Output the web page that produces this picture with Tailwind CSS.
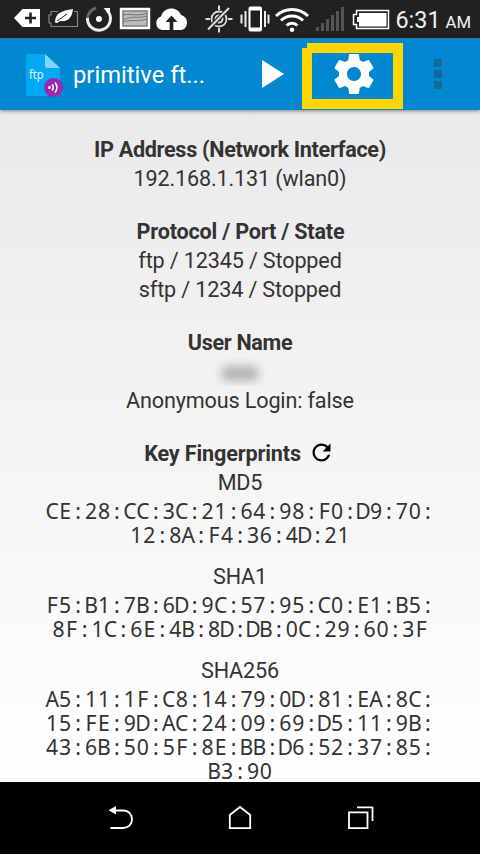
<!DOCTYPE html>
<html lang="en">
<head>
<meta charset="utf-8">
<title>primitive ftpd</title>
<script src="https://cdn.jsdelivr.net/npm/@tailwindcss/browser@4"></script>
</head>
<body class="w-[480px] h-[854px] overflow-hidden flex flex-col font-['Roboto',sans-serif] text-[#333]">
<header class="h-[38px] shrink-0 bg-[#212121] text-white">
<svg class="block" width="480" height="38" viewBox="0 0 480 38" fill="none">
  <!-- notifications -->
  <path d="M14 18 22.500 9H40V27H22.500Z" fill="#fff"/><path d="M30.500 12.500V23.500M25 18H36" stroke="#222" stroke-width="2.600"/>
  <path d="M58 11.500H51V15H49V23H51V26.500H77.500V11.500H74" stroke="#888" stroke-width="1.200"/>
  <path d="M55 22.500C55 13 61 11 73 9 72 17 69 22 60 21L57 23Z" fill="#fff"/><path d="M57 21 67 14" stroke="#222" stroke-width="1"/>
  <path d="M96 8A11.500 11.500 0 0 0 87.500 19" stroke="#666" stroke-width="3"/><path d="M87.500 18A11.500 11.500 0 1 0 107 10.500" stroke="#eee" stroke-width="3"/><path d="M103.500 8H110V15.500Z" fill="#fff"/><circle cx="99" cy="19" r="3" fill="#fff"/>
  <path d="M121 9H149V28H121Z" fill="#bbb" stroke="#fff" stroke-width="2.400"/><rect x="123" y="11" width="24" height="15" stroke="#666" stroke-width="1"/><path d="M123 15C131 13 139 17 147 13M123 20C132 15 138 19 147 16M123 22C131 19 138 22 147 19" stroke="#777" stroke-width="1"/>
  <path d="M162 30A7 7 0 0 1 161 16.500C164 6 178 6 181 15C190 17 188 30 181 30Z" fill="#fff"/><path d="M171.500 30V19" stroke="#222" stroke-width="3.600"/><path d="M165.500 22 171.500 15.500 177.500 22Z" fill="#222"/>
  <!-- location off -->
  <circle cx="219" cy="19" r="7.500" stroke="#ddd" stroke-width="1.800"/><circle cx="219" cy="19" r="3.500" stroke="#ddd" stroke-width="2"/>
  <path d="M219 5.500V10M219 28V32.500M205.500 19H210M228 19H232.500" stroke="#ddd" stroke-width="2"/>
  <path d="M208 29.500 229 8" stroke="#212121" stroke-width="4.500"/><path d="M208 29.500 229 8" stroke="#ddd" stroke-width="2"/>
  <!-- vibrate -->
  <rect x="249.500" y="7.500" width="11.500" height="23" rx="1" stroke="#fff" stroke-width="2"/><path d="M249 9H261.500M249 29H261.500" stroke="#fff" stroke-width="3"/>
  <path d="M245.500 11V27M241.500 14.500V23.500M265 11V27M268.500 14.500V23.500" stroke="#eee" stroke-width="2"/>
  <!-- wifi -->
  <path d="M276 16A23 23 0 0 1 308 16M281 20.500A16 16 0 0 1 303 20.500M286.500 25.500A8 8 0 0 1 297.500 25.500" stroke="#fff" stroke-width="3"/><circle cx="292" cy="29.800" r="2.300" fill="#fff"/>
  <!-- signal -->
  <path d="M317.500 31V27M322.500 31V23M327.500 31V19M332.500 31V15M337.500 31V11M342.500 31V7" stroke="#555" stroke-width="3"/>
  <!-- battery -->
  <path d="M356.500 10.500H388.500V28.500H356.500V24.500H353.500V14.500H356.500Z" stroke="#fff" stroke-width="1.500"/><path d="M359 13H386.500V26.500H359V22H357V17H359Z" fill="#fff"/>
  <text x="395.500" y="28" font-size="24" fill="#f2f2f2" textLength="45" lengthAdjust="spacingAndGlyphs">6:31</text>
  <text x="445.500" y="28" font-size="16.500" fill="#f2f2f2" textLength="25.500" lengthAdjust="spacingAndGlyphs">AM</text>
</svg>
</header>
<nav class="relative z-10 h-[72px] shrink-0 bg-[#0288d1] border-t border-[#1c7bb5] flex items-center shadow-[0_1px_4px_rgba(0,0,0,0.45)]">
  <svg class="ml-[24px] shrink-0" width="42" height="48" viewBox="24 50 42 48" fill="none">
    <path d="M28 53H45L60 67V93Q60 95 58 95H28Q26 95 26 93V55Q26 53 28 53Z" fill="#03a9f4"/><path d="M45 53 60 67H47Q45 67 45 65Z" fill="#81d4fa"/>
    <text x="29" y="78" font-size="12" fill="#e1f5fe" font-family="Noto Sans" textLength="14.500" lengthAdjust="spacingAndGlyphs">ftp</text>
    <circle cx="53.500" cy="86.500" r="9.500" fill="#9c27b0"/><circle cx="49.500" cy="86.500" r="1.500" fill="#fff"/>
    <path d="M52 83.500Q54.500 86.500 52 89.500M55 81.500Q59 86.500 55 91.500" stroke="#fff" stroke-width="1.600"/>
  </svg>
  <h1 class="ml-[7px] w-[150px] text-[24px] leading-[30px] text-white whitespace-nowrap font-['Roboto']"><svg class="block" width="150" height="34"><text x="0" y="25" font-size="24.500" fill="#fff" textLength="132" lengthAdjust="spacingAndGlyphs">primitive ft...</text></svg></h1>
  <svg class="ml-[39px] mb-px shrink-0" width="22" height="28" viewBox="0 0 22 28"><path d="M0 0 22 14 0 28Z" fill="#fff"/></svg>
  <svg class="ml-[18px] mt-[2px] shrink-0" width="102" height="68" viewBox="302 42 102 68">
    <path fill="#ffd600" fill-rule="evenodd" d="M307 43H403V109H302V48H307ZM312 53V99H393V53Z"/>
    <path transform="translate(330 50)scale(2)" fill="#fff" d="M19.430 12.980c.040-.320.070-.640.070-.980s-.030-.660-.070-.980l2.110-1.650c.190-.150.240-.420.120-.640l-2-3.460c-.120-.220-.390-.300-.610-.220l-2.490 1c-.520-.400-1.080-.730-1.690-.980l-.380-2.650C14.460 2.180 14.250 2 14 2h-4c-.250 0-.460.180-.490.420l-.380 2.650c-.610.250-1.170.590-1.690.980l-2.490-1c-.230-.090-.490 0-.610.220l-2 3.460c-.130.220-.070.490.120.640l2.110 1.650c-.040.320-.070.650-.070.980s.030.660.070.980l-2.110 1.650c-.190.150-.240.420-.120.640l2 3.460c.120.220.390.300.610.220l2.490-1c.520.400 1.080.730 1.690.980l.380 2.650c.030.240.240.420.490.420h4c.250 0 .460-.180.490-.420l.380-2.650c.610-.250 1.170-.590 1.690-.980l2.490 1c.230.090.490 0 .610-.220l2-3.460c.120-.220.070-.490-.120-.640l-2.110-1.650zM12 15.500c-1.930 0-3.500-1.570-3.500-3.500s1.570-3.500 3.500-3.500 3.500 1.570 3.500 3.500-1.570 3.500-3.500 3.500z"/>
  </svg>
  <div class="ml-[30px] mb-px flex flex-col gap-[3px]"><i class="size-2 bg-[#126a9c]"></i><i class="size-2 bg-[#126a9c]"></i><i class="size-2 bg-[#126a9c]"></i></div>
</nav>
<main class="h-[672px] shrink-0 overflow-hidden bg-linear-to-b from-[#eaeaea] to-white pt-[25px] text-center text-[21.6px] leading-[29px] tracking-[-0.15px]">
  <section class="mb-6"><h2 class="font-bold tracking-[-0.31px]">IP Address (Network Interface)</h2><p>192.168.1.131 (wlan0)</p></section>
  <section class="mb-6"><h2 class="font-bold tracking-[-0.2px] pl-px">Protocol / Port / State</h2><p>ftp / 12345 / Stopped</p><p>sftp / 1234 / Stopped</p></section>
  <section class="mb-6"><h2 class="font-bold tracking-[-0.32px]">User Name</h2>
    <div class="h-[29px] flex justify-center items-center overflow-hidden"><span class="w-[38px] h-[15px] mt-[4px] rounded-lg bg-[#888]/60 blur-[5px]"></span></div>
    <p>Anonymous Login: false</p></section>
  <section>
    <div class="flex justify-center items-center"><h2 class="font-bold">Key Fingerprints</h2>
      <svg class="ml-[7px] mr-[1px] mb-[2px]" width="27" height="27" viewBox="0 0 24 24"><path d="M17.650 6.350C16.200 4.900 14.210 4 12 4c-4.420 0-7.990 3.580-7.990 8s3.570 8 7.990 8c3.730 0 6.840-2.550 7.730-6h-2.080c-.820 2.330-3.040 4-5.650 4-3.310 0-6-2.690-6-6s2.690-6 6-6c1.660 0 3.140.690 4.220 1.780L13 11h7V4l-2.350 2.350z"/></svg></div>
    <h3>MD5</h3>
    <div class="mt-[2px] mb-[15px]" data-key="CE:28:CC:3C:21:64:98:F0:D9:70:|12:8A:F4:36:4D:21"></div>
    <h3>SHA1</h3>
    <div class="mt-[2px] mb-[15px]" data-key="F5:B1:7B:6D:9C:57:95:C0:E1:B5:|8F:1C:6E:4B:8D:DB:0C:29:60:3F"></div>
    <h3>SHA256</h3>
    <div class="mt-[2px]" data-key="A5:11:1F:C8:14:79:0D:81:EA:8C:|15:FE:9D:AC:24:09:69:D5:11:9B:|43:6B:50:5F:8E:BB:D6:52:37:85:|B3:90"></div>
  </section>
</main>
<footer class="grow bg-black">
<svg class="block" width="480" height="72" viewBox="0 782 480 72" fill="none" stroke="#fff" stroke-width="1.800">
  <path d="M110.500 828H123C135 828 135 810.500 123 810.500H114"/><path d="M108.500 810.300 116 806V814.500Z" fill="#fff" stroke="none"/>
  <path d="M229.800 815 240 807 250.200 815V828.200H229.800Z"/>
  <path d="M349 812.300H367.500V828.200H349ZM357 807.300H372.500V821"/>
</svg>
</footer>
<script>
// Fixed-pitch fingerprint rows: one cell per character.
document.querySelectorAll('[data-key]').forEach(box => {
  box.innerHTML = box.dataset.key.split('|').map(line =>
    `<p class="h-6 leading-6 whitespace-nowrap font-['Noto_Sans'] text-[21.2px] tracking-normal">` +
    [...line].map(c => `<span class="inline-flex justify-center w-[12.96px]">${c}</span>`).join('') + '</p>').join('');
});
</script>
</body>
</html>
